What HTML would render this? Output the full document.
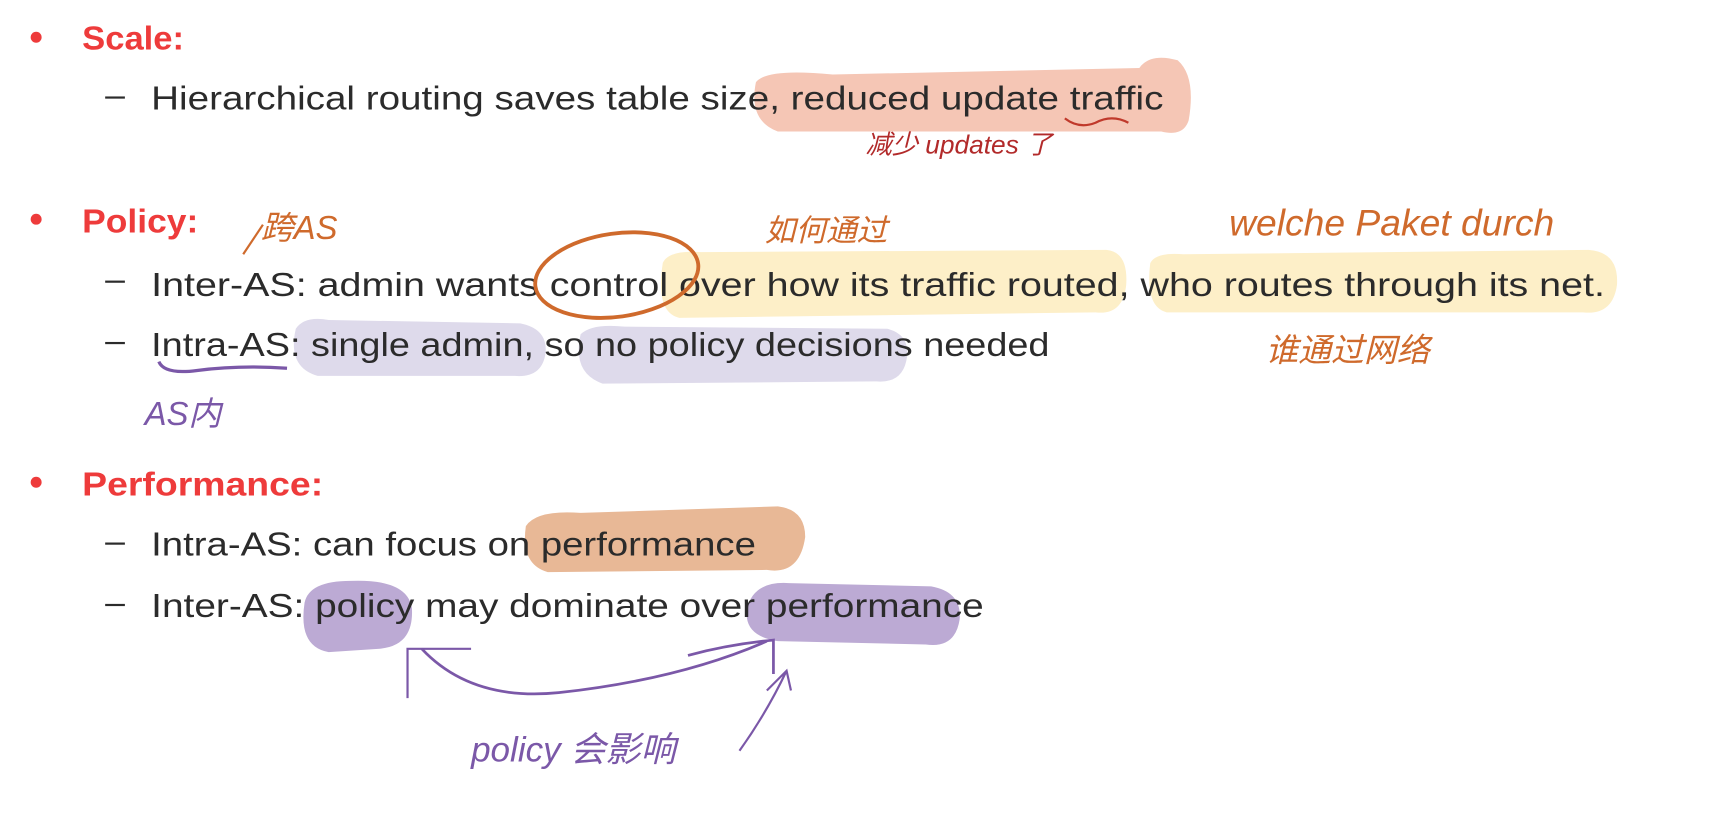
<!DOCTYPE html>
<html><head><meta charset="utf-8"><style>
html,body{margin:0;padding:0;background:#fff;width:1709px;height:822px;overflow:hidden}
svg{display:block}
.t{font-family:"Liberation Sans",sans-serif;font-size:30px;fill:#2b2b2b}
.h{font-family:"Liberation Sans",sans-serif;font-size:30px;font-weight:bold;fill:#ee3b3b}
.w{font-family:"Liberation Sans","Noto Sans CJK SC",sans-serif;font-style:italic}
</style></head><body>
<svg width="1709" height="822" viewBox="0 0 1560 750" preserveAspectRatio="none">
<path d="M690 75 Q700 62 760 68 L1040 62 Q1050 48 1075 55 Q1092 70 1085 110 Q1080 125 1060 120 L710 120 Q683 110 690 75Z" fill="#f5c6b5"/>
<path d="M605 240 Q610 228 640 230 L1010 228 Q1030 230 1028 260 Q1025 288 1000 285 L620 290 Q598 285 605 240Z" fill="#fdefc8"/>
<path d="M1050 240 Q1055 230 1080 232 L1450 228 Q1478 230 1476 260 Q1472 288 1445 285 L1065 285 Q1045 280 1050 240Z" fill="#fdefc8"/>
<path d="M270 300 Q278 288 300 292 L475 295 Q500 300 498 322 Q495 345 470 343 L290 343 Q262 335 270 300Z" fill="#dedaeb"/>
<path d="M530 305 Q540 295 570 298 L810 300 Q830 305 828 325 Q825 350 800 348 L550 350 Q522 340 530 305Z" fill="#dedaeb"/>
<path d="M480 480 Q490 465 530 468 L710 462 Q735 465 735 490 Q730 525 700 520 L500 522 Q475 515 480 480Z" fill="#e8b896"/>
<path d="M278 550 Q282 530 320 530 Q372 528 376 555 Q378 590 345 592 L300 595 Q272 590 278 550Z" fill="#bcaad4"/>
<path d="M682 555 Q688 530 720 532 L850 535 Q878 540 876 565 Q872 592 845 588 L710 585 Q678 580 682 555Z" fill="#bcaad4"/>
<circle cx="33" cy="34" r="5" fill="#ee3b3b"/>
<circle cx="33" cy="200" r="5" fill="#ee3b3b"/>
<circle cx="33" cy="440" r="5" fill="#ee3b3b"/>
<text class="h" x="75" y="45" textLength="93" lengthAdjust="spacingAndGlyphs">Scale:</text>
<text class="h" x="75" y="212" textLength="106" lengthAdjust="spacingAndGlyphs">Policy:</text>
<text class="h" x="75" y="452" textLength="220" lengthAdjust="spacingAndGlyphs">Performance:</text>
<g fill="#2b2b2b"><rect x="96" y="88" width="18" height="2"/><rect x="96" y="256" width="18" height="2"/><rect x="96" y="312" width="18" height="2"/><rect x="96" y="495" width="18" height="2"/><rect x="96" y="551" width="18" height="2"/></g>
<text class="t" x="138" y="100" textLength="924" lengthAdjust="spacingAndGlyphs">Hierarchical routing saves table size, reduced update traffic</text>
<text class="t" x="138" y="270" textLength="1327" lengthAdjust="spacingAndGlyphs">Inter-AS: admin wants control over how its traffic routed, who routes through its net.</text>
<text class="t" x="138" y="325" textLength="820" lengthAdjust="spacingAndGlyphs">Intra-AS: single admin, so no policy decisions needed</text>
<text class="t" x="138" y="507" textLength="552" lengthAdjust="spacingAndGlyphs">Intra-AS: can focus on performance</text>
<text class="t" x="138" y="563" textLength="760" lengthAdjust="spacingAndGlyphs">Inter-AS: policy may dominate over performance</text>
<ellipse cx="563" cy="251" rx="75" ry="38" fill="none" stroke="#cf6a2c" stroke-width="3.5" transform="rotate(-8 563 251)"/>
<path d="M972 108 Q985 118 1000 112 Q1015 104 1030 112" fill="none" stroke="#c0392b" stroke-width="2"/>
<text class="w" x="790" y="140" font-size="24" fill="#b22a2a">减少 updates 了</text>
<text class="w" x="238" y="218" font-size="30" fill="#cf6a2c">跨AS</text>
<path d="M222 232 L240 205" stroke="#cf6a2c" stroke-width="2"/>
<text class="w" x="698" y="220" font-size="28" fill="#cf6a2c">如何通过</text>
<text class="w" x="1122" y="215" font-size="34" fill="#cf6a2c">welche Paket durch</text>
<text class="w" x="1155" y="330" font-size="30" fill="#cf6a2c">谁通过网络</text>
<path d="M145 330 Q150 342 180 338 Q220 333 262 336" fill="none" stroke="#7b58a8" stroke-width="3"/>
<text class="w" x="132" y="388" font-size="30" fill="#7b58a8">AS内</text>
<path d="M372 637 L372 592 L430 592" fill="none" stroke="#7b58a8" stroke-width="2"/>
<path d="M385 592 Q430 640 510 632 Q620 620 700 585 M628 598 Q665 588 706 584 L706 615" fill="none" stroke="#7b58a8" stroke-width="2.5"/>
<path d="M675 685 Q700 650 718 612 M700 630 L718 612 L722 630" fill="none" stroke="#7b58a8" stroke-width="2"/>
<text class="w" x="430" y="695" font-size="32" fill="#7b58a8">policy 会影响</text>
</svg>
</body></html>
